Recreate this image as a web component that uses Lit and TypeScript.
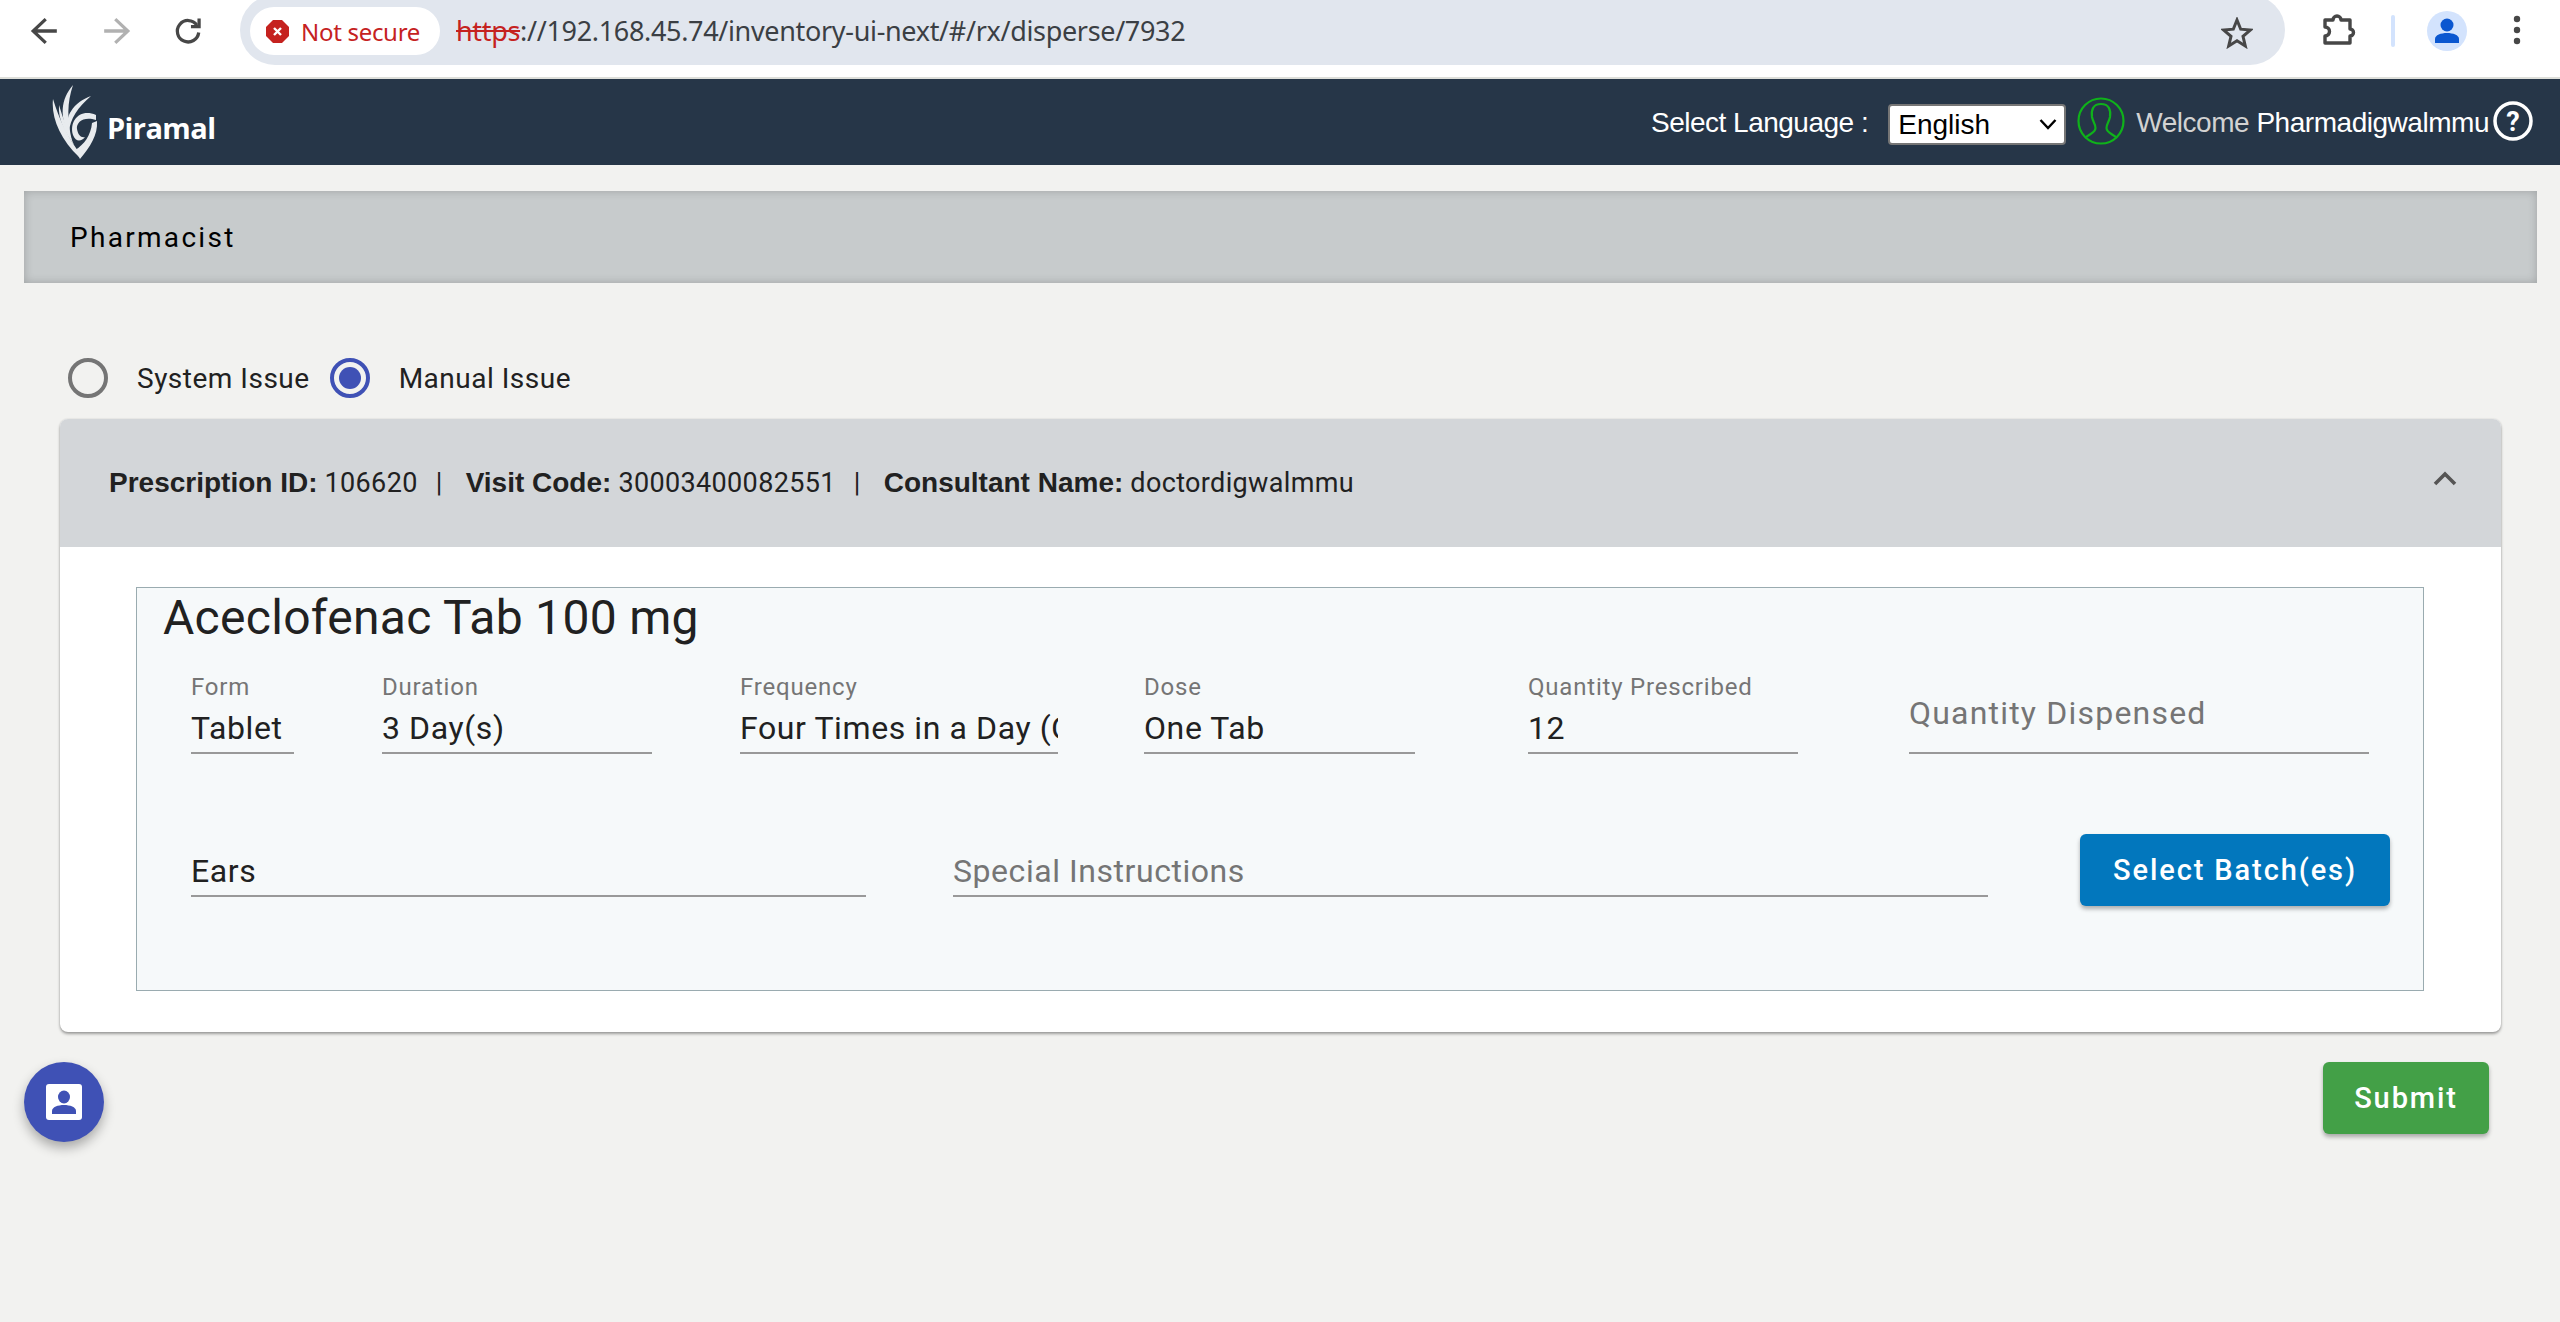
import { LitElement, html, css, svg } from "lit";
import { customElement } from "lit/decorators.js";

const back = svg`<path d="M24 7 L7 23 L24 39 M8 23 H39" fill="none" stroke="currentColor" stroke-width="4.4"/>`;
const forward = svg`<path d="M22 7 L39 23 L22 39 M38 23 H7" fill="none" stroke="currentColor" stroke-width="4.4"/>`;

@customElement("app-root")
export class AppRoot extends LitElement {
  static styles = css`
    :host { display: block; min-height: 1322px; background: #f2f2f0; font-family: Roboto, "Liberation Sans", sans-serif; color: #212121; }
    * { box-sizing: border-box; }
    svg { display: block; flex: none; }

    .chrome { height: 79px; background: #fff; border-bottom: 2px solid #dedfda; display: flex; align-items: flex-start; overflow: hidden; padding-left: 28px; }
    .nav { width: 34px; height: 34px; margin-top: 14px; color: #474747; }
    .nav.fwd { margin-left: 37px; color: #b1b1b1; }
    .nav.reload { margin-left: 38px; }
    .omni { margin-left: 35px; width: 2045px; height: 70px; margin-top: -5px; border-radius: 35px; background: #e1e6ee; display: flex; align-items: center; padding: 0 0 0 10px; font-family: "Noto Sans", "Open Sans", sans-serif; }
    .chip { height: 48px; width: 190px; background: #fff; border-radius: 24px; display: flex; align-items: center; padding-left: 16px; gap: 12px; color: #c5221f; font-size: 24px; margin-top: 2px; letter-spacing: -0.3px; }
    .url { margin-left: 16px; font-size: 27px; color: #3b3f44; margin-top: 1px; letter-spacing: -0.33px; white-space: nowrap; }
    .url s { color: #c5221f; text-decoration-thickness: 2px; }
    .star { margin-left: auto; margin-right: 32px; margin-top: 6px; }
    .ext { margin-left: 36px; margin-top: 11px; }
    .divider { width: 4px; height: 32px; background: #d3e3fd; border-radius: 2px; margin: 15px 0 0 34px; }
    .avatar { width: 40px; height: 40px; margin: 11px 0 0 32px; border-radius: 50%; background: #d3e3fd; }
    .dots { margin: 15px 0 0 46px; }

    .top { height: 86px; background: #263648; display: flex; align-items: center; padding-left: 52px; color: #fff; }
    .logo { display: flex; align-items: flex-end; margin-top: -1px; }
    .logo span { font-family: "Open Sans", sans-serif; font-weight: 700; font-size: 29px; line-height: 29px; letter-spacing: -0.6px; margin-left: 9px; margin-bottom: 17px; }
    .lang { margin-left: auto; font-size: 28px; letter-spacing: -0.5px; font-family: "Liberation Sans", sans-serif; margin-top: 1px; }
    .picker { position: relative; margin: 4px 0 0 20px; width: 178px; height: 41px; flex: none; }
    .picker svg { position: absolute; right: 9px; top: 14px; pointer-events: none; }
    select { appearance: none; -webkit-appearance: none; display: block; width: 100%; height: 100%; font-size: 28px; font-family: "Liberation Sans", sans-serif; background: #fff; color: #000; border: 2px solid #767676; border-radius: 4px; padding: 0 0 0 8px; }
    .prof { margin-left: 11px; margin-top: -2px; }
    .welcome { margin-left: 11px; font-size: 28px; font-family: "Liberation Sans", sans-serif; letter-spacing: -0.47px; color: #d2d2d2; margin-top: 2px; white-space: nowrap; }
    .welcome b { font-weight: 400; color: #fff; }
    .help { margin-left: 4px; margin-right: 27px; margin-top: -2px; }

    .role { height: 92px; margin: 26px 23px 0 24px; background: #c7cbcc; box-shadow: inset 0 0 10px rgba(0,0,0,.2); display: flex; align-items: center; padding-left: 46px; font-size: 28px; letter-spacing: 2.3px; color: #000; }

    .radios { display: flex; align-items: center; height: 40px; margin: 75px 0 0 68px; font-size: 28px; letter-spacing: .5px; color: #212121; }
    .radio { width: 40px; height: 40px; border-radius: 50%; border: 4px solid #757575; flex: none; display: flex; align-items: center; justify-content: center; }
    .radio.on { border-color: #3f51b5; margin-left: 20px; }
    .radio.on i { width: 22px; height: 22px; border-radius: 50%; background: #3f51b5; display: block; }
    .radio + span { margin-left: 29px; }

    .card { margin: 21px 59px 0 60px; background: #fff; border-radius: 8px; box-shadow: 0 2px 3px rgba(0,0,0,.35), 0 0 2px rgba(0,0,0,.12); height: 613px; overflow: hidden; }
    .card-head { height: 128px; background: #d3d6d9; display: flex; align-items: center; padding: 0 41px 0 49px; font-size: 27px; letter-spacing: .35px; color: #212121; }
    .card-head b { font-family: "Liberation Sans", sans-serif; font-weight: 700; font-size: 28px; letter-spacing: 0; }
    .sep { margin: 0 23px 0 18px; }
    .card-head svg { margin-left: auto; margin-top: -10px; }
    .box { margin: 40px 0 0 76px; width: 2288px; height: 404px; background: #f6f9fa; border: 1px solid #9aabb0; padding-top: 2px; }
    h2 { margin: 0 0 0 26px; font-weight: 400; font-size: 48px; line-height: 56px; letter-spacing: .3px; color: #212121; }
    .row1 { display: flex; margin: 26px 0 0 54px; }
    .row2 { display: flex; align-items: flex-start; margin: 80px 0 0 54px; }
    .field { display: flex; flex-direction: column; justify-content: flex-end; border-bottom: 2px solid #999; height: 82px; flex: none; overflow: hidden; white-space: nowrap; }
    .row2 .field { height: 63px; }
    .field label { font-size: 24px; line-height: 26px; color: #757575; letter-spacing: .8px; margin-bottom: 6px; }
    .field div { font-size: 32px; line-height: 44px; margin-bottom: 2px; letter-spacing: .6px; color: #212121; }
    .field div.ph { color: #757575; margin-bottom: 17px; letter-spacing: 1.2px; }
    .row2 .field div.ph { margin-bottom: 2px; letter-spacing: .55px; }
    .f1 { width: 103px; }
    .f2 { width: 270px; margin-left: 88px; }
    .f3 { width: 318px; margin-left: 88px; }
    .f4 { width: 271px; margin-left: 86px; }
    .f5 { width: 270px; margin-left: 113px; }
    .f6 { width: 460px; margin-left: 111px; }
    .f7 { width: 675px; }
    .f8 { width: 1035px; margin-left: 87px; }
    .btn { border: 0; height: 72px; border-radius: 6px; color: #fff; font-family: inherit; font-size: 29px; font-weight: 500; letter-spacing: 1.9px; box-shadow: 0 3px 4px rgba(0,0,0,.3); padding: 0; }
    .btn.batch { width: 310px; margin-left: 92px; background: #0277bd; }
    .btn.submit { width: 166px; background: #43a047; margin-right: 71px; }

    .foot { display: flex; justify-content: space-between; align-items: flex-start; padding: 30px 0 0 24px; }
    .fab { width: 80px; height: 80px; border-radius: 50%; background: #3f51b5; display: flex; align-items: center; justify-content: center; box-shadow: 0 6px 12px rgba(0,0,0,.3); }
  `;

  render() {
    return html`
      <div class="chrome">
        <svg class="nav" viewBox="0 0 46 46">${back}</svg>
        <svg class="nav fwd" viewBox="0 0 46 46">${forward}</svg>
        <svg class="nav reload" viewBox="0 0 46 46" fill="none" stroke="currentColor" stroke-width="4.4"><path d="M35 15 A14.5 14.5 0 1 0 37.5 25"/><path d="M38 6 V17 H27" /></svg>
        <div class="omni">
          <div class="chip">
            <svg width="23" height="23" viewBox="0 0 23 23"><path d="M7 0 H16 L23 7 V16 L16 23 H7 L0 16 V7 Z" fill="#c5221f"/><path d="M8 8 L15 15 M15 8 L8 15" stroke="#fff" stroke-width="2.4"/></svg>
            <span>Not secure</span>
          </div>
          <div class="url"><s>https</s>://192.168.45.74/inventory-ui-next/#/rx/disperse/7932</div>
          <svg class="star" width="32" height="32" viewBox="0 0 32 32"><path d="M16 3 L19.7 12.2 L29.5 13 L22 19.4 L24.3 29 L16 23.8 L7.7 29 L10 19.4 L2.500 13 L12.300 12.200 Z" fill="none" stroke="#474747" stroke-width="3"/></svg>
        </div>
        <svg class="ext" width="36" height="36" viewBox="0 0 36 36"><path d="M4 9 H12 A4 4 0 0 1 20 9 H29 V18 A3.500 3.500 0 0 1 29 25 V32 H4 V25 A4.500 4.500 0 0 0 4 16 Z" fill="none" stroke="#474747" stroke-width="3.4" stroke-linejoin="round"/></svg>
        <div class="divider"></div>
        <svg class="avatar" viewBox="0 0 40 40" fill="#0b57d0"><circle cx="20" cy="14" r="6.500"/><path d="M8 32 V28 C8 24 14 22 20 22 C26 22 32 24 32 28 V32 Z"/></svg>
        <svg class="dots" width="8" height="32" viewBox="0 0 8 32" fill="#474747"><circle cx="4" cy="4" r="3.200"/><circle cx="4" cy="15" r="3.200"/><circle cx="4" cy="26" r="3.200"/></svg>
      </div>

      <div class="top">
        <div class="logo">
          <svg width="46" height="74" viewBox="0 0 46 74" fill="#e8ebee">
            <path d="M1 14 C-1 32 8 54 27 72 L26 66 C15 50 7 34 1 14 Z"/>
            <path d="M7 20 C6 34 12 46 22 60 C16 46 11 34 7 20 Z"/>
            <path d="M21 0 C9 14 6 32 20 56 C15 34 15 18 21 0 Z"/>
            <path d="M39 11 C22 17 11 32 17 47 C18 34 26 22 39 11 Z"/>
            <path d="M44 30 C28 23 17 36 21 50 C24 58 30 56 33 52 C29 53 26 50 25 44 C24 37 32 31 44 35 Z"/>
            <path d="M45 36 C46 50 38 62 28 74 L23 65 C32 60 39 50 40 38 Z"/>
          </svg>
          <span>Piramal</span>
        </div>
        <div class="lang">Select Language :</div>
        <div class="picker">
          <select><option>English</option></select>
          <svg width="18" height="12" viewBox="0 0 18 12"><path d="M1.500 2 L9 10 L16.500 2" fill="none" stroke="#000" stroke-width="2.400"/></svg>
        </div>
        <svg class="prof" width="48" height="48" viewBox="0 0 48 48" fill="none" stroke="#0fb21a" stroke-width="2.200"><circle cx="24" cy="24" r="22.500"/><path d="M24 7 C16 7 14 13 15 20 C16 25 18.500 27 18.500 31 C18.500 36 12 37 8 41 M24 7 C32 7 34 13 33 20 C32 25 29.500 27 29.500 31 C29.500 36 36 37 40 41"/></svg>
        <div class="welcome">Welcome <b>Pharmadigwalmmu</b></div>
        <svg class="help" width="40" height="40" viewBox="0 0 40 40"><circle cx="20" cy="20" r="18" fill="none" stroke="#fff" stroke-width="3.500"/><text x="20" y="29.500" text-anchor="middle" fill="#fff" font-size="27" font-weight="700" font-family="Roboto, sans-serif">?</text></svg>
      </div>

      <div class="role">Pharmacist</div>

      <div class="radios">
        <div class="radio"></div><span>System Issue</span>
        <div class="radio on"><i></i></div><span>Manual Issue</span>
      </div>

      <div class="card">
        <div class="card-head">
          <span><b>Prescription ID:</b> 106620</span><span class="sep">|</span>
          <span><b>Visit Code:</b> 30003400082551</span><span class="sep">|</span>
          <span><b>Consultant Name:</b> doctordigwalmmu</span>
          <svg width="30" height="20" viewBox="0 0 30 20"><path d="M5 16 L15 6 L25 16" fill="none" stroke="#555" stroke-width="3.600"/></svg>
        </div>
        <div class="box">
          <h2>Aceclofenac Tab 100 mg</h2>
          <div class="row1">
            <div class="field f1"><label>Form</label><div>Tablet</div></div>
            <div class="field f2"><label>Duration</label><div>3 Day(s)</div></div>
            <div class="field f3"><label>Frequency</label><div>Four Times in a Day (Q.I.D)</div></div>
            <div class="field f4"><label>Dose</label><div>One Tab</div></div>
            <div class="field f5"><label>Quantity Prescribed</label><div>12</div></div>
            <div class="field f6"><div class="ph">Quantity Dispensed</div></div>
          </div>
          <div class="row2">
            <div class="field f7"><div>Ears</div></div>
            <div class="field f8"><div class="ph">Special Instructions</div></div>
            <button class="btn batch">Select Batch(es)</button>
          </div>
        </div>
      </div>

      <div class="foot">
        <div class="fab"><svg width="40" height="40" viewBox="0 0 40 40"><rect x="2" y="2" width="36" height="36" rx="3" fill="#fff"/><ellipse cx="20" cy="15" rx="6" ry="6.500" fill="#3f51b5"/><path d="M8 32 V29 C8 25 14 23 20 23 C26 23 32 25 32 29 V32 Z" fill="#3f51b5"/></svg></div>
        <button class="btn submit">Submit</button>
      </div>
    `;
  }
}
